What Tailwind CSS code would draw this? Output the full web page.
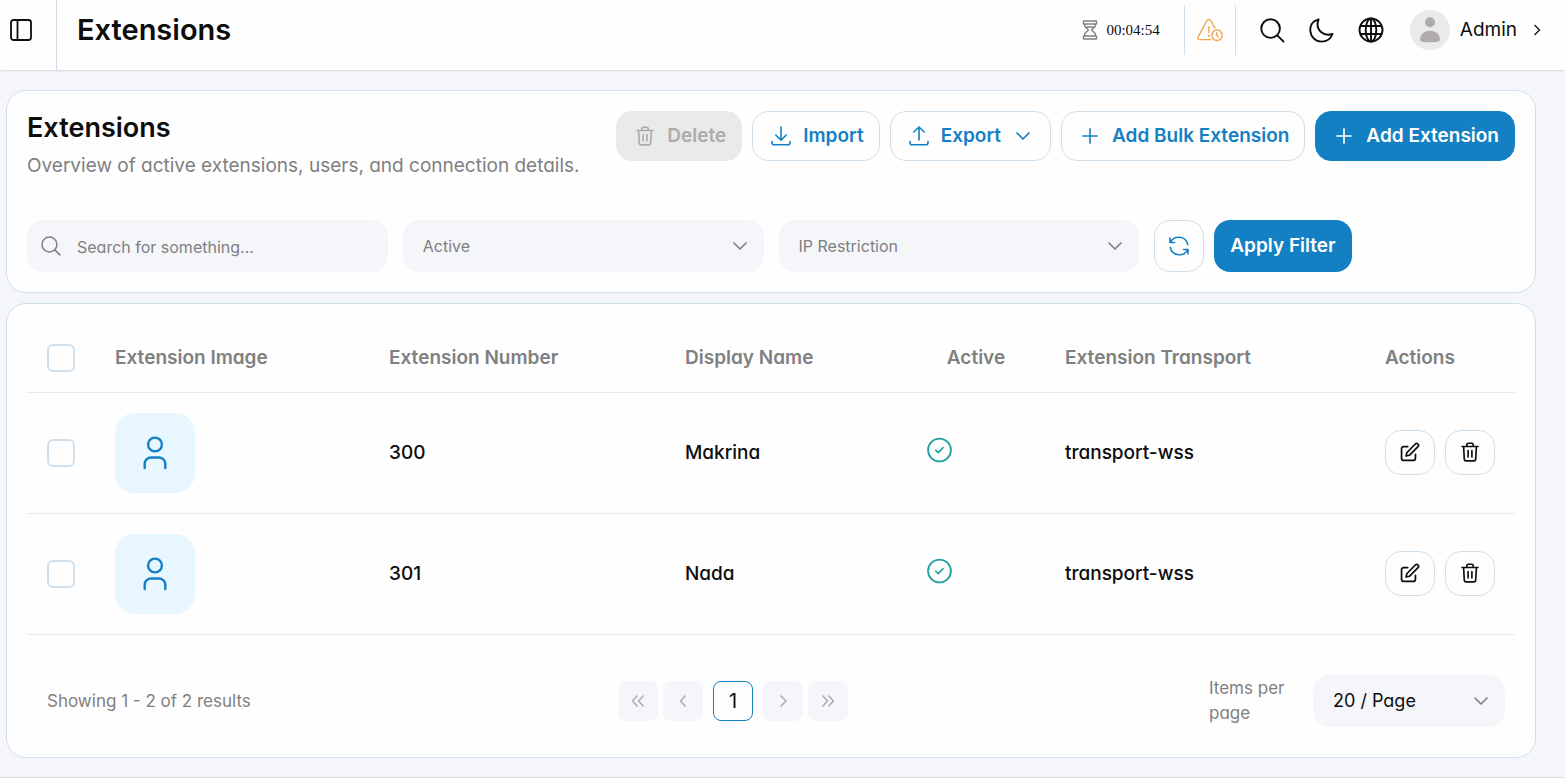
<!DOCTYPE html>
<html lang="en">
<head>
    <meta charset="UTF-8" />
    <meta name="viewport" content="width=device-width, initial-scale=1.0">
    <title>Extensions</title>
    <script src="https://cdn.jsdelivr.net/npm/@tailwindcss/browser@4"></script>
</head>
<body class="min-h-screen bg-[#f4f6fa] font-['Inter','Liberation_Sans',sans-serif] [font-feature-settings:'cv11'] text-lg text-[#0d0d0d]">

    <!-- Icons -->
    <svg class="hidden">
        <symbol id="i-search" viewBox="0 0 26 26" fill="none" stroke="currentColor" stroke-width="2" stroke-linecap="round">
            <circle cx="11" cy="11" r="9.7" /><path d="M18 18l6.5 6.5" />
        </symbol>
        <symbol id="i-down" viewBox="0 0 16 16" fill="none" stroke="currentColor" stroke-width="1.7" stroke-linecap="round" stroke-linejoin="round">
            <path d="M2 5l6 6 6-6" />
        </symbol>
        <symbol id="i-trash" viewBox="0 0 20 22" fill="none" stroke="currentColor" stroke-width="1.8" stroke-linecap="round" stroke-linejoin="round">
            <path d="M1.2 5h17.6M6.5 4.8V3a1.6 1.6 0 0 1 1.6-1.6h3.8A1.6 1.6 0 0 1 13.5 3v1.8M3 5.2l.7 13.6a2 2 0 0 0 2 1.9h8.6a2 2 0 0 0 2-1.9L17 5.2M7.9 9.5v7M12.1 9.5v7" />
        </symbol>
        <symbol id="i-edit" viewBox="0 0 22 22" fill="none" stroke="currentColor" stroke-width="1.9" stroke-linecap="round" stroke-linejoin="round">
            <path d="M8.5 5H4.2A2.5 2.5 0 0 0 1.7 7.5v10.3a2.5 2.5 0 0 0 2.5 2.5h10.3a2.5 2.5 0 0 0 2.5-2.5V13.5" />
            <path d="M7.5 11.8L16.8 2.2a2.1 2.1 0 0 1 3 3L10.3 14.6l-3.6.8z" />
        </symbol>
        <symbol id="i-plus" viewBox="0 0 16 16" fill="none" stroke="currentColor" stroke-width="1.6" stroke-linecap="round">
            <path d="M8 .8v14.4M.8 8h14.4" />
        </symbol>
        <symbol id="i-user" viewBox="0 0 24 34" fill="none" stroke="currentColor" stroke-width="2.4" stroke-linecap="round">
            <circle cx="12" cy="8.5" r="6.9" />
            <path d="M1.7 32v-4.5a6.5 6.5 0 0 1 6.5-6h7.6a6.5 6.5 0 0 1 6.5 6V32" />
        </symbol>
        <symbol id="i-check" viewBox="0 0 26 26" fill="none" stroke="currentColor" stroke-width="1.9" stroke-linecap="round" stroke-linejoin="round">
            <circle cx="12.5" cy="13" r="11.4" /><path d="M8.7 13.2l2.6 2.4 4.8-5" stroke-width="1.6" />
        </symbol>
    </svg>

    <!-- Top bar -->
    <header class="flex h-[70px] bg-[#fefefe] shadow">
        <div class="flex w-[57px] shrink-0 border-r border-[#cfe0ec] pb-2.5 pl-2.5">
            <button type="button" aria-label="Toggle sidebar">
                <svg class="size-[22px]" viewBox="0 0 22 22" fill="none" stroke="currentColor" stroke-width="1.8"><rect x="1" y="1" width="20" height="20" rx="2.5" /><path d="M7.5 1v20" /></svg>
            </button>
        </div>
        <div class="flex grow items-center pb-2.5 pl-5 pr-6">
            <h1 class="grow text-[29px] leading-10 font-semibold">Extensions</h1>
            <svg class="h-5 w-4 text-[#808080]" viewBox="0 0 16 20" fill="none" stroke="currentColor" stroke-width="1.4" stroke-linejoin="round"><path d="M1.5 1h13v3h-13zM1.5 16h13v3h-13zM2.8 4v2.5L6.5 10l-3.7 3.5V16M13.2 4v2.5L9.5 10l3.7 3.5V16M4.5 7h7" /></svg>
            <span class="mt-0.5 ml-2 font-['Liberation_Serif',serif] text-[15px]">00:04:54</span>
            <div class="ml-6 flex h-[50px] items-center border-x border-[#cfe0ec] px-3 text-[#f2a654]">
                <svg class="h-6 w-[26px]" viewBox="0 0 27 24" fill="none" stroke="currentColor" stroke-width="1.5" stroke-linecap="round" stroke-linejoin="round"><path d="M14 22H2.8a1.8 1.8 0 0 1-1.6-2.8L10.2 2.4c1-1.8 3.2-1.8 4.2 0L18.5 9.8M12.3 8.5v6" /><path d="M12.3 18v.2" stroke-width="2" /><circle cx="20.8" cy="17.5" r="5.4" /><path d="M20.5 14.8v2.9l1.8 1.3" /></svg>
            </div>
            <button type="button" class="ml-6" aria-label="Search"><svg class="size-[25px]"><use href="#i-search" /></svg></button>
            <button type="button" class="ml-6" aria-label="Dark mode">
                <svg class="size-[25px]" viewBox="0 0 26 26" fill="none" stroke="currentColor" stroke-width="2" stroke-linejoin="round"><path d="M10 1.5C3.5 3 .8 8 1.4 13.5 2 20 7 24.6 13 24.6c5 0 9.5-2.8 11.4-8C16.5 19.5 5.5 13 10 1.5z" /></svg>
            </button>
            <button type="button" class="ml-6" aria-label="Language">
                <svg class="size-[26px]" viewBox="0 0 26 26" fill="none" stroke="currentColor" stroke-width="1.9"><circle cx="13" cy="13" r="11.5" /><ellipse cx="13" cy="13" rx="5.3" ry="11.5" /><path d="M13 1.5v23M2.5 9h21M2.5 17h21" /></svg>
            </button>
            <button type="button" class="ml-[26px] flex items-center">
                <svg class="size-10" viewBox="0 0 40 40"><circle cx="20" cy="20" r="20" fill="#e8ebea" /><g fill="#afabab"><circle cx="20" cy="12.3" r="5" /><path d="M10 30c0-5.5 4.5-9.2 10-9.2s10 3.7 10 9.2c0 1.5-3 2.2-10 2.2S10 31.5 10 30z" /></g></svg>
                <span class="ml-2.5 text-[19px]">Admin</span>
                <svg class="ml-4 h-3 w-2" viewBox="0 0 8 12" fill="none" stroke="currentColor" stroke-width="1.3"><path d="M1.5 1l5 5-5 5" /></svg>
            </button>
        </div>
    </header>

    <main class="mt-5 mr-[29px] ml-1.5 space-y-2.5">
        <section class="rounded-[20px] border border-[#cfe0ec] bg-[#fefefe] p-5">
            <div class="flex justify-between">
                <div>
                    <h2 class="text-[27px] leading-[34px] font-semibold">Extensions</h2>
                    <p class="mt-[9px] text-[19px] leading-6 text-[#808080]">Overview of active extensions, users, and connection details.</p>
                </div>
                <div class="flex h-[50px] gap-2.5 text-[19px] font-semibold text-[#1480c4]">
                    <button type="button" disabled class="flex items-center gap-3 rounded-2xl border border-[#e8ebea] bg-[#e8ebea] pr-[15px] pl-[18px] text-[#afabab]">
                        <svg class="size-5"><use href="#i-trash" /></svg>Delete
                    </button>
                    <button type="button" class="flex items-center gap-3 rounded-2xl border border-[#cfe0ec] pr-[15px] pl-[18px]">
                        <svg class="size-5" viewBox="0 0 20 20" fill="none" stroke="currentColor" stroke-width="1.6" stroke-linecap="round" stroke-linejoin="round"><path d="M10 1v13M4.8 9l5.2 5.2L15.2 9M1 15.5v1.3a2 2 0 0 0 2 2h14a2 2 0 0 0 2-2v-1.3" /></svg>Import
                    </button>
                    <button type="button" class="flex items-center gap-3 rounded-2xl border border-[#cfe0ec] pr-[15px] pl-[18px]">
                        <svg class="size-5" viewBox="0 0 20 20" fill="none" stroke="currentColor" stroke-width="1.6" stroke-linecap="round" stroke-linejoin="round"><path d="M10 14V1M4.8 6L10 1l5.2 5M1 15.5v1.3a2 2 0 0 0 2 2h14a2 2 0 0 0 2-2v-1.3" /></svg>Export
                        <svg class="mr-1 ml-0.5 size-4"><use href="#i-down" /></svg>
                    </button>
                    <button type="button" class="flex items-center gap-3 rounded-2xl border border-[#cfe0ec] pr-[15px] pl-[18px]">
                        <svg class="mx-0.5 size-4"><use href="#i-plus" /></svg>Add Bulk Extension
                    </button>
                    <button type="button" class="flex items-center gap-3 rounded-2xl border border-[#1480c4] bg-[#1480c4] pr-[15px] pl-[18px] text-white">
                        <svg class="mx-0.5 size-4"><use href="#i-plus" /></svg>Add Extension
                    </button>
                </div>
            </div>

            <!-- Filters -->
            <form class="mt-[42px] grid grid-cols-4 gap-[15px] text-base text-[#808080]">
                <label class="flex h-[52px] items-center gap-4 rounded-2xl bg-[#f4f6fa] px-3.5">
                    <svg class="size-5 shrink-0"><use href="#i-search" /></svg>
                    <input type="search" aria-label="Search" placeholder="Search for something..." class="w-full bg-transparent pt-0.5 outline-none placeholder:text-[#808080]">
                </label>
                <div class="relative">
                    <select aria-label="Status" class="h-[52px] w-full appearance-none rounded-2xl bg-[#f4f6fa] px-5">
                        <option>Active</option>
                    </select>
                    <svg class="pointer-events-none absolute top-[18px] right-4 size-4"><use href="#i-down" /></svg>
                </div>
                <div class="relative">
                    <select aria-label="IP Restriction" class="h-[52px] w-full appearance-none rounded-2xl bg-[#f4f6fa] px-5">
                        <option>IP Restriction</option>
                    </select>
                    <svg class="pointer-events-none absolute top-[18px] right-4 size-4"><use href="#i-down" /></svg>
                </div>
                <div class="flex gap-2.5">
                    <button type="reset" aria-label="Reset filters" class="flex w-[50px] items-center justify-center rounded-2xl border border-[#cfe0ec] text-[#1480c4]">
                        <svg class="size-5" viewBox="0 0 20 20" fill="none" stroke="currentColor" stroke-width="1.6" stroke-linecap="round" stroke-linejoin="round"><path d="M1 2v4.5h4.5M1.5 6.3C4.5-.5 16.500-1 18.800 8.500M19 18v-4.500h-4.500M18.500 13.700C15.500 20.500 3.500 21 1.200 11.500" /></svg>
                    </button>
                    <button type="submit" class="rounded-2xl bg-[#1480c4] px-4 text-[19px] font-semibold text-white">Apply Filter</button>
                </div>
            </form>
        </section>

        <section class="rounded-[20px] border border-[#cfe0ec] bg-[#fefefe] p-5">
            <table class="w-full table-fixed text-left text-[19px] font-medium">
                <thead class="text-[#808080]">
                    <tr class="border-b border-[#e8ebea]">
                        <th class="w-[68px] p-5"><input type="checkbox" aria-label="Select all" class="block size-7 appearance-none rounded-md border-2 border-[#cfe0ec]"></th>
                        <th class="w-[274px] px-5 font-semibold">Extension Image</th>
                        <th class="w-[296px] px-5 font-semibold">Extension Number</th>
                        <th class="w-[242px] px-5 font-semibold">Display Name</th>
                        <th class="w-[138px] px-5 text-center font-semibold">Active</th>
                        <th class="w-[320px] px-5 font-semibold">Extension Transport</th>
                        <th class="w-[150px] px-5 font-semibold">Actions</th>
                    </tr>
                </thead>
                <tbody>
                    <tr class="border-b border-[#e8ebea]">
                        <td class="p-5"><input type="checkbox" aria-label="Select 300" class="block size-7 appearance-none rounded-md border-2 border-[#cfe0ec]"></td>
                        <td class="p-5"><div class="flex size-20 items-center justify-center rounded-[20px] bg-[#e7f6ff] text-[#1480c4]"><svg class="h-[34px] w-6"><use href="#i-user" /></svg></div></td>
                        <td class="px-5">300</td>
                        <td class="px-5">Makrina</td>
                        <td class="px-5 pb-1.5 text-[#26a1a1]"><svg class="size-[26px]"><use href="#i-check" /></svg></td>
                        <td class="px-5">transport-wss</td>
                        <td class="px-5 pb-0.5">
                            <div class="flex gap-2.5">
                                <button type="button" aria-label="Edit" class="flex h-[45px] w-[50px] items-center justify-center rounded-2xl border border-[#cfe0ec]"><svg class="size-5"><use href="#i-edit" /></svg></button>
                                <button type="button" aria-label="Delete" class="flex h-[45px] w-[50px] items-center justify-center rounded-2xl border border-[#cfe0ec]"><svg class="size-5"><use href="#i-trash" /></svg></button>
                            </div>
                        </td>
                    </tr>
                    <tr class="border-b border-[#e8ebea]">
                        <td class="p-5"><input type="checkbox" aria-label="Select 301" class="block size-7 appearance-none rounded-md border-2 border-[#cfe0ec]"></td>
                        <td class="p-5"><div class="flex size-20 items-center justify-center rounded-[20px] bg-[#e7f6ff] text-[#1480c4]"><svg class="h-[34px] w-6"><use href="#i-user" /></svg></div></td>
                        <td class="px-5">301</td>
                        <td class="px-5">Nada</td>
                        <td class="px-5 pb-1.5 text-[#26a1a1]"><svg class="size-[26px]"><use href="#i-check" /></svg></td>
                        <td class="px-5">transport-wss</td>
                        <td class="px-5 pb-0.5">
                            <div class="flex gap-2.5">
                                <button type="button" aria-label="Edit" class="flex h-[45px] w-[50px] items-center justify-center rounded-2xl border border-[#cfe0ec]"><svg class="size-5"><use href="#i-edit" /></svg></button>
                                <button type="button" aria-label="Delete" class="flex h-[45px] w-[50px] items-center justify-center rounded-2xl border border-[#cfe0ec]"><svg class="size-5"><use href="#i-trash" /></svg></button>
                            </div>
                        </td>
                    </tr>
                </tbody>
            </table>

            <!-- Pagination -->
            <div class="flex items-center justify-between pt-10 pr-2.5 pb-2.5 pl-5">
                <p class="w-[210px] text-[17px] whitespace-nowrap text-[#808080]">Showing 1 - 2 of 2 results</p>
                <nav class="flex gap-[5px] text-[#afabab]">
                    <button type="button" disabled aria-label="First page" class="flex size-10 items-center justify-center rounded-lg bg-[#f4f6fa]"><svg class="size-3.5" viewBox="0 0 14 14" fill="none" stroke="currentColor" stroke-width="1.5"><path d="M6.5 1.5L1.5 7l5 5.5M12.5 1.5L7.5 7l5 5.5" /></svg></button>
                    <button type="button" disabled aria-label="Previous page" class="flex size-10 items-center justify-center rounded-lg bg-[#f4f6fa]"><svg class="size-3.5" viewBox="0 0 14 14" fill="none" stroke="currentColor" stroke-width="1.5"><path d="M9.5 1.5L4.5 7l5 5.5" /></svg></button>
                    <button type="button" aria-current="page" class="mx-[5px] size-10 rounded-lg border border-[#1480c4] text-xl text-[#0d0d0d]">1</button>
                    <button type="button" disabled aria-label="Next page" class="flex size-10 items-center justify-center rounded-lg bg-[#f4f6fa]"><svg class="size-3.5" viewBox="0 0 14 14" fill="none" stroke="currentColor" stroke-width="1.5"><path d="M4.5 1.5L10 7l-5.5 5.5" /></svg></button>
                    <button type="button" disabled aria-label="Last page" class="flex size-10 items-center justify-center rounded-lg bg-[#f4f6fa]"><svg class="size-3.5" viewBox="0 0 14 14" fill="none" stroke="currentColor" stroke-width="1.5"><path d="M1.5 1.5L6.5 7l-5 5.5M7.5 1.5L12.5 7l-5 5.5" /></svg></button>
                </nav>
                <div class="flex items-center gap-6">
                    <label for="perPage" class="w-20 text-[17px] leading-[25px] text-[#808080]">Items per page</label>
                    <div class="relative">
                        <select id="perPage" class="h-[52px] w-48 appearance-none rounded-2xl bg-[#f4f6fa] px-5">
                            <option>20 / Page</option>
                        </select>
                        <svg class="pointer-events-none absolute top-[18px] right-4 size-4 text-[#808080]"><use href="#i-down" /></svg>
                    </div>
                </div>
            </div>
        </section>
    </main>
    <footer class="mt-[19px] border-t border-[#dcdfe4]"></footer>
</body>
</html>
